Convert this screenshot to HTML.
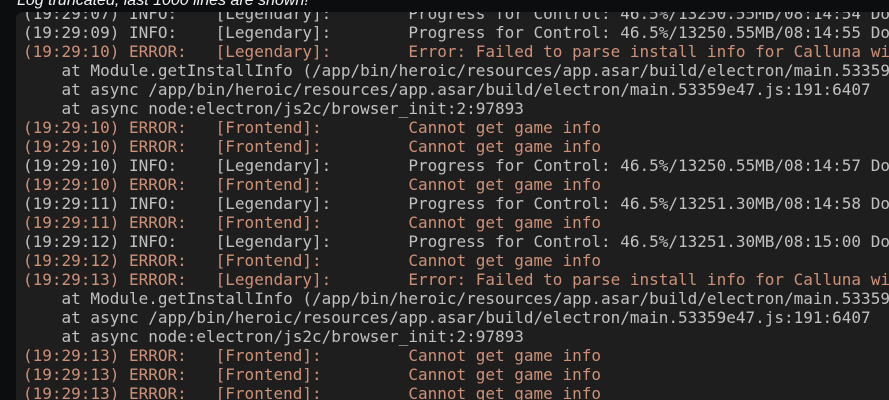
<!DOCTYPE html>
<html><head><style>
html,body{margin:0;padding:0;width:889px;height:400px;overflow:hidden;background:#0b0d0f;}
.hdr{position:absolute;left:17px;top:-8px;font:italic 16px "Liberation Sans",sans-serif;color:#f2f2f2;white-space:nowrap;}
.panel{position:absolute;left:16px;top:12px;width:900px;height:388px;background:#1e1e1e;border-radius:7px 0 0 0;overflow:hidden;}
pre{position:absolute;left:7px;top:-8px;margin:0;font:16px/19px "DejaVu Sans Mono",monospace;color:#c0c0c0;white-space:pre;}
.e{color:#ce9178;}
</style></head><body>
<div class="hdr">Log truncated, last 1000 lines are shown!</div>
<div class="panel"><pre>(19:29:07) INFO:    [Legendary]:        Progress for Control: 46.5%/13250.55MB/08:14:54 Do
(19:29:09) INFO:    [Legendary]:        Progress for Control: 46.5%/13250.55MB/08:14:55 Do
<span class="e">(19:29:10) ERROR:   [Legendary]:        Error: Failed to parse install info for Calluna wi</span>
    at Module.getInstallInfo (/app/bin/heroic/resources/app.asar/build/electron/main.53359
    at async /app/bin/heroic/resources/app.asar/build/electron/main.53359e47.js:191:6407
    at async node:electron/js2c/browser_init:2:97893
<span class="e">(19:29:10) ERROR:   [Frontend]:         Cannot get game info</span>
<span class="e">(19:29:10) ERROR:   [Frontend]:         Cannot get game info</span>
(19:29:10) INFO:    [Legendary]:        Progress for Control: 46.5%/13250.55MB/08:14:57 Do
<span class="e">(19:29:10) ERROR:   [Frontend]:         Cannot get game info</span>
(19:29:11) INFO:    [Legendary]:        Progress for Control: 46.5%/13251.30MB/08:14:58 Do
<span class="e">(19:29:11) ERROR:   [Frontend]:         Cannot get game info</span>
(19:29:12) INFO:    [Legendary]:        Progress for Control: 46.5%/13251.30MB/08:15:00 Do
<span class="e">(19:29:12) ERROR:   [Frontend]:         Cannot get game info</span>
<span class="e">(19:29:13) ERROR:   [Legendary]:        Error: Failed to parse install info for Calluna wi</span>
    at Module.getInstallInfo (/app/bin/heroic/resources/app.asar/build/electron/main.53359
    at async /app/bin/heroic/resources/app.asar/build/electron/main.53359e47.js:191:6407
    at async node:electron/js2c/browser_init:2:97893
<span class="e">(19:29:13) ERROR:   [Frontend]:         Cannot get game info</span>
<span class="e">(19:29:13) ERROR:   [Frontend]:         Cannot get game info</span>
<span class="e">(19:29:13) ERROR:   [Frontend]:         Cannot get game info</span></pre></div>
</body></html>
